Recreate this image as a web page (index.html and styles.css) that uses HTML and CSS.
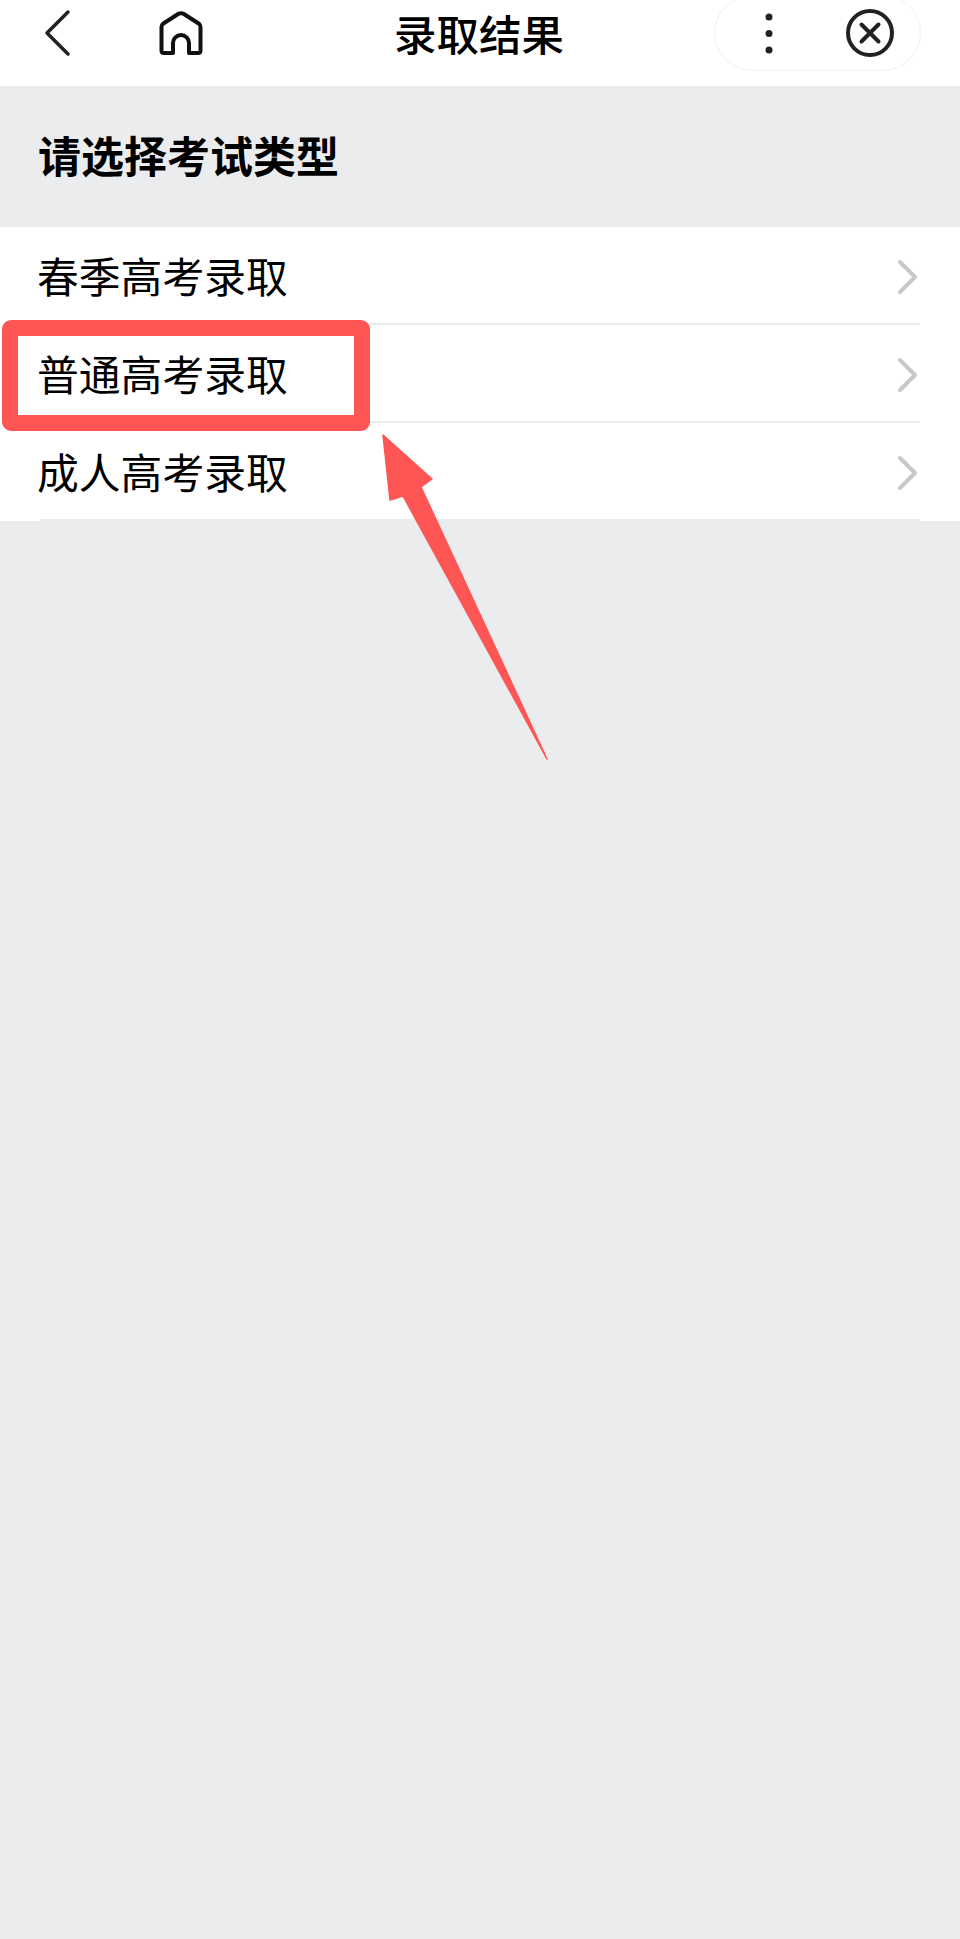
FILE: index.html
```html
<!DOCTYPE html>
<html lang="zh-CN">
  <head>
    <meta charset="UTF-8" />
    <meta name="viewport" content="width=device-width, initial-scale=1.0" />
    <title>录取结果</title>
    <link rel="stylesheet" href="styles.css">
  </head>
  <body>
    <header class="top-bar">
      <div class="top-left">
        <svg class="icon-back" width="30" height="48" viewBox="0 0 30 48">
          <path d="M25 3 L4 24 L25 45" />
        </svg>
        <svg class="icon-home" width="46" height="46" viewBox="0 0 46 46">
          <path d="M3.500 40.500 V17 Q3.500 15 5 13.800 L20.500 3.800 Q23 2.500 25.500 3.800 L41 13.800 Q42.500 15 42.500 17 V40.500 Q42.500 43 40 43 H31 V33 A8 8 0 0 0 15 33 V43 H6 Q3.500 43 3.500 40.500 Z" />
        </svg>
      </div>
      <h1 class="page-title">录取结果</h1>
      <div class="top-right">
        <div class="capsule">
          <svg class="icon-more" width="12" height="44" viewBox="0 0 12 44">
            <circle cx="6" cy="6" r="3.500" />
            <circle cx="6" cy="22.500" r="3.500" />
            <circle cx="6" cy="39" r="3.500" />
          </svg>
          <svg class="icon-close" width="50" height="50" viewBox="0 0 50 50">
            <circle cx="25" cy="25" r="22" />
            <path d="M16.500 16.500 L33.500 33.500 M33.500 16.500 L16.500 33.500" />
          </svg>
        </div>
      </div>
    </header>

    <main class="content">
      <h2 class="section-title">请选择考试类型</h2>
      <ul class="exam-list">
        <li class="exam-item">
          <span>春季高考录取</span>
          <svg class="chevron" width="22" height="38" viewBox="0 0 22 38"><path d="M4 4 L19 19 L4 34" /></svg>
        </li>
        <li class="exam-item">
          <span>普通高考录取</span>
          <svg class="chevron" width="22" height="38" viewBox="0 0 22 38"><path d="M4 4 L19 19 L4 34" /></svg>
        </li>
        <li class="exam-item">
          <span>成人高考录取</span>
          <svg class="chevron" width="22" height="38" viewBox="0 0 22 38"><path d="M4 4 L19 19 L4 34" /></svg>
        </li>
      </ul>
    </main>

    <!-- red annotation over the page -->
    <div class="mark-box"></div>
    <svg class="mark-arrow" width="960" height="800" viewBox="0 0 960 800">
      <path d="M383 435 L432 479 L421 487 L547 759 L403 496 L390 500 Z" />
    </svg>
  </body>
</html>
```

FILE: styles.css
```css
* {
  box-sizing: border-box;
}

html,
body {
  height: 100%;
}

body {
  position: relative;
  margin: 0;
  overflow: hidden;
  font-family: "Noto Sans CJK SC", "Noto Sans", sans-serif;
  color: #000;
  background-color: #ebecee;
}

.top-bar {
  display: grid;
  grid-template-columns: 1fr auto 1fr;
  height: 86px;
  background-color: #fff;
}

.top-left {
  display: flex;
  align-items: center;
  gap: 85px;
  padding-left: 43px;
  padding-bottom: 20px;
}

.icon-back path,
.icon-home path,
.icon-close circle,
.icon-close path {
  fill: none;
  stroke: #222;
  stroke-linecap: round;
  stroke-linejoin: round;
}

.icon-back path {
  stroke-width: 3.500;
}

.icon-home path {
  stroke: #111;
  stroke-width: 4;
}

.icon-close circle,
.icon-close path {
  stroke-width: 4;
}

.page-title {
  margin: 0;
  padding-right: 2px;
  font-size: 42.500px;
  font-weight: 500;
  line-height: 66px;
}

.top-right {
  display: flex;
  justify-content: flex-end;
  padding-right: 39px;
}

.capsule {
  display: flex;
  align-items: center;
  justify-content: space-between;
  width: 207px;
  height: 76px;
  margin-top: -5px;
  padding: 0 25px 0 48px;
  border: 1px solid #f0f0f0;
  border-radius: 38px;
}

.icon-more circle {
  fill: #222;
}

.section-title {
  margin: 0;
  height: 141px;
  padding-left: 38px;
  font-size: 43px;
  font-weight: 700;
  line-height: 137px;
}

.exam-list {
  margin: 0;
  padding: 0 40px;
  list-style: none;
  background-color: #fff;
}

.exam-item {
  display: flex;
  align-items: center;
  justify-content: space-between;
  height: 98px;
  padding-top: 2px;
  font-size: 41.800px;
  line-height: 1;
  border-bottom: 2px solid #ebecee;
}

.exam-item span {
  margin-left: -3px;
}

.chevron {
  margin-top: 2px;
  margin-right: 2px;
}

.chevron path {
  fill: none;
  stroke: #c8c8c8;
  stroke-width: 4;
  stroke-linecap: round;
  stroke-linejoin: round;
}

.mark-box {
  position: absolute;
  left: 2px;
  top: 320px;
  width: 368px;
  height: 111px;
  border: 16px solid #fe5555;
  border-radius: 9px;
}

.mark-arrow {
  position: absolute;
  left: 0;
  top: 0;
}

.mark-arrow path {
  fill: #fe5555;
  stroke: #fe5555;
  stroke-width: 1.500;
  stroke-linejoin: round;
}
```
